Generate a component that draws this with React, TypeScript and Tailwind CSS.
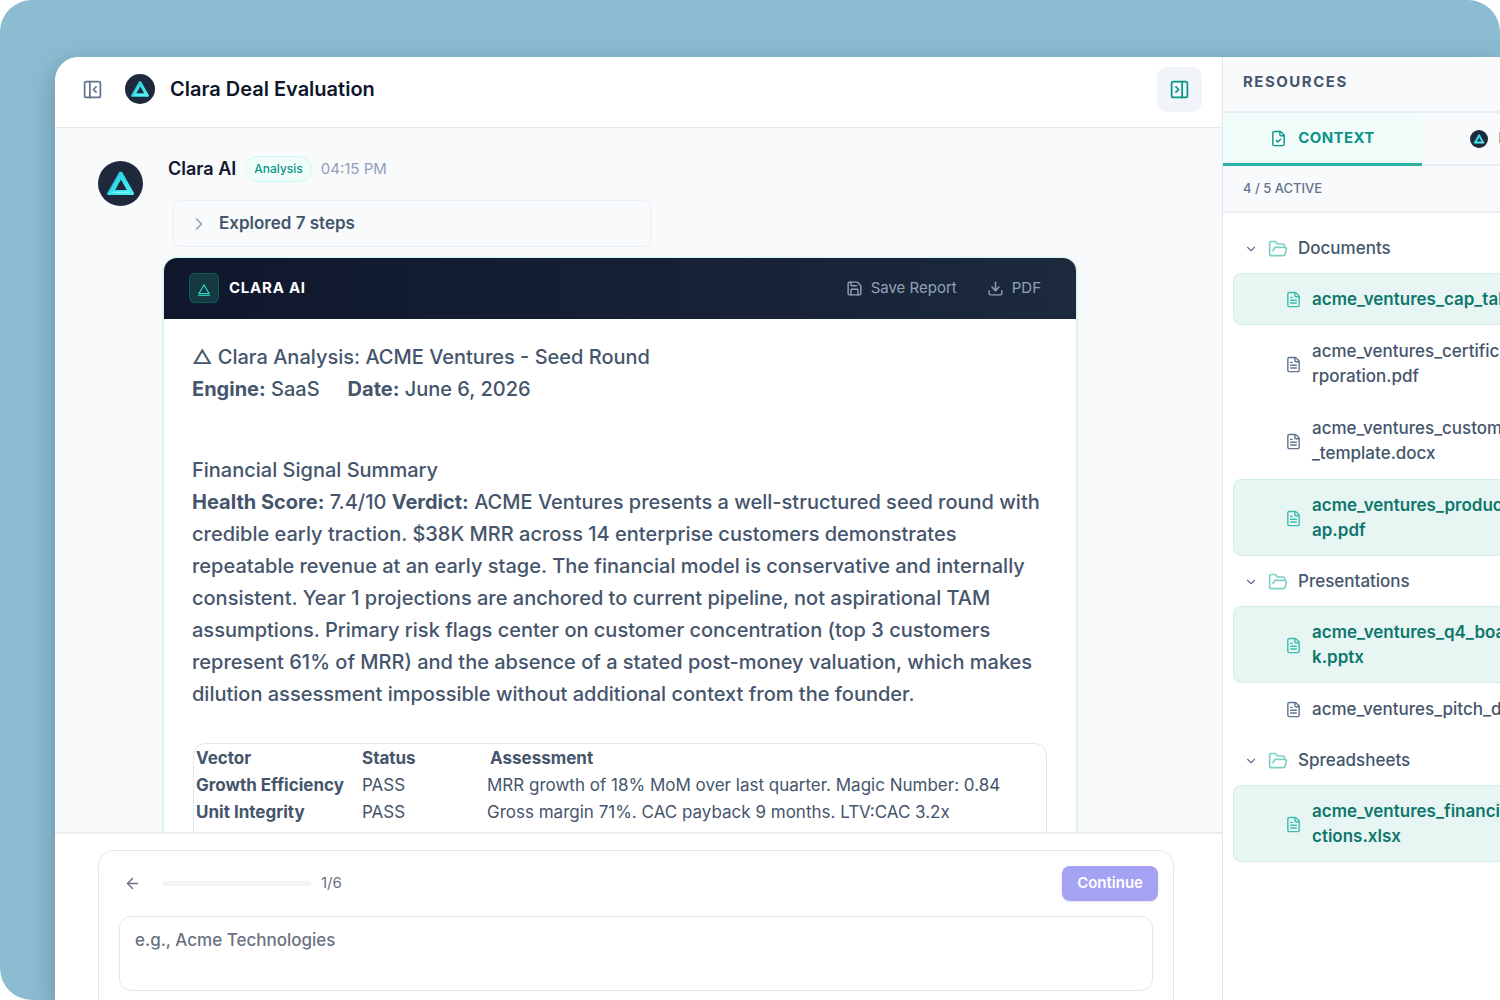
import React, { useState } from 'react';
import {
  ArrowLeft, ChevronDown, ChevronRight, Download, FileCheck, FileText, FolderOpen, PanelLeftClose, PanelRightClose, Save
} from 'lucide-react';

interface ResourceFile {
  lines: string[];
  active: boolean;
}

interface ResourceFolder {
  name: string;
  files: ResourceFile[];
}

const folders: ResourceFolder[] = [
  {
    name: 'Documents',
    files: [
      { lines: ['acme_ventures_cap_table.pdf'], active: true },
      { lines: ['acme_ventures_certificate_inco', 'rporation.pdf'], active: false },
      { lines: ['acme_ventures_customer_contract', '_template.docx'], active: false },
      { lines: ['acme_ventures_product_roadm', 'ap.pdf'], active: true },
    ],
  },
  {
    name: 'Presentations',
    files: [
      { lines: ['acme_ventures_q4_board_dec', 'k.pptx'], active: true },
      { lines: ['acme_ventures_pitch_deck.pptx'], active: false },
    ],
  },
  {
    name: 'Spreadsheets',
    files: [{ lines: ['acme_ventures_financial_proje', 'ctions.xlsx'], active: true }],
  },
];

const vectors = [
  { name: 'Growth Efficiency', status: 'PASS', note: 'MRR growth of 18% MoM over last quarter. Magic Number: 0.84' },
  { name: 'Unit Integrity', status: 'PASS', note: 'Gross margin 71%. CAC payback 9 months. LTV:CAC 3.2x' },
];

const ClaraLogo: React.FC<{ className?: string }> = ({ className }) => (
  <svg viewBox="0 0 45 45" className={className} aria-hidden="true">
    <defs>
      <linearGradient id="clara-edge" x1="0" y1="0" x2="1" y2="1">
        <stop offset="0" stopColor="#2cc4de" />
        <stop offset="0.5" stopColor="#35e0ea" />
        <stop offset="1" stopColor="#4ff0f5" />
      </linearGradient>
    </defs>
    <circle cx="22.5" cy="22.5" r="22.5" fill="#1e293b" />
    <path
      fillRule="evenodd"
      fill="url(#clara-edge)"
      d="M21.4 10.8h2.6L36.2 32.6l-1 1.4H9.8l-.8-1.4L21.4 10.8Zm1.5 7.8L17.2 29h11.6l-5.9-10.4Z"
    />
    <path d="M21.4 11.4 9.6 32.4" stroke="#2a93b8" strokeWidth="0.8" fill="none" />
    <path d="M15 31.4h16" stroke="#7ff7fa" strokeWidth="1.2" fill="none" />
  </svg>
);

const Header: React.FC = () => (
  <header className="flex h-[71px] shrink-0 items-center justify-between border-b border-slate-200 bg-white pr-5 pl-[27px] pb-[6px]">
    <div className="flex items-center">
      <button aria-label="Collapse sidebar" className="text-slate-500">
        <PanelLeftClose size={21} strokeWidth={2} />
      </button>
      <ClaraLogo className="ml-[22px] size-[30px]" />
      <h1 className="ml-[15px] text-xl font-semibold text-slate-900">Clara Deal Evaluation</h1>
    </div>
    <button
      aria-label="Close resources"
      className="flex size-[45px] items-center justify-center rounded-[10px] bg-slate-100 text-[#0d9488]"
    >
      <PanelRightClose size={21} strokeWidth={2} />
    </button>
  </header>
);

const AnalysisCard: React.FC = () => (
  <article className="mt-[10px] overflow-hidden rounded-t-[14px] border border-teal-100 bg-white text-slate-600 shadow-sm">
    <div className="flex h-[61px] items-center justify-between bg-gradient-to-r from-slate-900 to-slate-800 pr-[35px] pb-[1px] pl-[25px]">
      <div className="flex items-center gap-[10px]">
        <span className="flex size-[30px] items-center justify-center rounded-md border border-teal-700/60 bg-[#163840]">
          <svg viewBox="0 0 14 14" className="mt-1 size-[14px]" fill="none" aria-hidden="true">
            <path d="M7 2 1.8 10.6h10.4L7 2Z" stroke="#2dd4bf" strokeWidth="1.2" />
            <path d="M1.2 12.4h11.6" stroke="#2dd4bf" strokeWidth="1" />
          </svg>
        </span>
        <span className="text-[15px] font-bold tracking-wider text-white">CLARA AI</span>
      </div>
      <div className="flex items-center gap-[30px] text-[15px] text-slate-400">
        <button className="flex items-center gap-2">
          <Save size={17} />
          Save Report
        </button>
        <button className="flex items-center gap-2">
          <Download size={17} />
          PDF
        </button>
      </div>
    </div>

    <div className="px-7 pt-[22px] text-xl leading-8 font-[450]">
      <p>△ Clara Analysis: ACME Ventures - Seed Round</p>
      <p className="flex gap-7">
        <span><strong>Engine:</strong> SaaS</span>
        <span><strong>Date:</strong> June 6, 2026</span>
      </p>
      <h2 className="mt-[49px]">Financial Signal Summary</h2>
      <p>
        <strong>Health Score:</strong> 7.4/10 <strong>Verdict:</strong> ACME Ventures presents a well-structured seed
        round with credible early traction. $38K MRR across 14 enterprise customers demonstrates repeatable revenue at
        an early stage. The financial model is conservative and internally consistent. Year 1 projections are anchored
        to current pipeline, not aspirational TAM assumptions. Primary risk flags center on customer concentration (top
        3 customers represent 61% of MRR) and the absence of a stated post-money valuation, which makes dilution
        assessment impossible without additional context from the founder.
      </p>

      <div className="mt-[33px] mr-[1px] ml-[1px] h-[120px] rounded-xl border border-slate-200 pt-[1px] pl-[2px]">
        <table className="w-full table-fixed text-left text-[17px] leading-[27px] font-normal">
          <thead>
            <tr>
              <th className="w-[166px] font-bold">Vector</th>
              <th className="w-[125px] font-bold">Status</th>
              <th className="pl-[3px] font-bold">Assessment</th>
            </tr>
          </thead>
          <tbody>
            {vectors.map((row) => (
              <tr key={row.name}>
                <th className="font-bold whitespace-nowrap">{row.name}</th>
                <td>{row.status}</td>
                <td>{row.note}</td>
              </tr>
            ))}
          </tbody>
        </table>
      </div>
    </div>
  </article>
);

const Messages: React.FC = () => (
  <section className="min-h-0 flex-1 overflow-hidden bg-[#f9fafc] pt-7 pr-12 pl-[43px]">
    <div className="flex gap-5">
      <ClaraLogo className="mt-[5px] size-[45px] shrink-0" />
      <div className="min-w-0 max-w-[914px] flex-1">
        <div className="flex h-[26px] items-center gap-[9px] pl-[5px]">
          <span className="text-lg font-semibold text-slate-900">Clara AI</span>
          <span className="rounded-full border border-teal-100 bg-[#f0fdfa] px-2 text-xs leading-6 font-medium text-[#0d9488]">
            Analysis
          </span>
          <span className="text-[15px] text-slate-400">04:15 PM</span>
        </div>
        <button className="mt-[18px] ml-[10px] flex h-[47px] w-[478px] items-center rounded-lg border border-slate-200/70 pl-[15px] text-[17px] font-semibold text-slate-600">
          <ChevronRight size={20} className="mr-[10px] text-slate-400" />
          Explored 7 steps
        </button>
        <AnalysisCard />
      </div>
    </div>
  </section>
);

const Composer: React.FC = () => {
  const [company, setCompany] = useState('');

  return (
    <footer className="h-[168px] shrink-0 border-t-2 border-slate-200/80 bg-white pt-4 pr-12 pl-[43px]">
      <div className="h-[180px] rounded-2xl border border-gray-200 pt-[15px] pr-5 pl-5">
        <div className="-mr-[5px] flex h-[35px] items-center text-gray-500">
          <button aria-label="Previous question" className="ml-[5px]">
            <ArrowLeft size={17} />
          </button>
          <div className="ml-[21px] h-[5px] w-[149px] rounded-full bg-gray-100" />
          <span className="ml-[10px] text-[15px]">1/6</span>
          <button
            disabled
            className="ml-auto h-[35px] rounded-lg bg-[#a5a2f4] px-[15px] text-[15px] font-semibold text-white shadow-sm"
          >
            Continue
          </button>
        </div>
        <textarea
          aria-label="Company name"
          value={company}
          onChange={(e) => setCompany(e.target.value)}
          placeholder="e.g., Acme Technologies"
          className="mt-[15px] block h-[75px] w-full resize-none rounded-xl border border-gray-200 px-[15px] py-[11px] text-[17px] leading-[25px] font-[450] outline-none placeholder:text-gray-500"
        />
      </div>
    </footer>
  );
};

const Resources: React.FC = () => (
  <aside className="-mr-[121px] flex w-[399px] shrink-0 flex-col border-l border-slate-200 bg-white">
    <div className="h-[56px] border-b-2 border-slate-200/70 bg-[#f9fafc] pt-[13px] pl-5">
      <h2 className="text-[15px] leading-6 font-bold tracking-widest text-slate-600">RESOURCES</h2>
    </div>

    <div className="grid h-[53px] grid-cols-2 bg-[#f9fafc] text-[15px] font-bold">
      <button className="flex items-center justify-center gap-[11px] border-b-3 border-[#2bb0a2] bg-[#f0fdfa] tracking-wide text-[#0d9488]">
        <FileCheck size={17} />
        CONTEXT
      </button>
      <button className="flex items-center justify-center gap-[11px] border-b-2 border-slate-200/70 tracking-wide text-slate-500">
        <ClaraLogo className="size-[18px]" />
        INSIGHTS
      </button>
    </div>

    <p className="border-b-2 border-slate-200/70 bg-[#f9fafc] pl-5 text-[13px] leading-[45px] font-medium text-slate-500">
      4 / 5 ACTIVE
    </p>

    <div className="pt-[10px] pl-[10px]">
      {folders.map((folder) => (
        <div key={folder.name}>
          <button className="flex h-[50px] w-full items-center pt-[1px] pl-[11px] text-[17px] font-[450] text-slate-600">
            <ChevronDown size={14} className="mr-[10px] text-slate-500" />
            <FolderOpen size={20} className="mr-[10px] text-[#7fd0c4]" />
            {folder.name}
          </button>
          <ul>
            {folder.files.map((file) => (
              <li
                key={file.lines[0]}
                className={`flex items-center gap-[10px] rounded-lg border pt-[13px] pb-3 pl-[51px] text-[17px] leading-[25px] whitespace-nowrap ${
                  file.active
                    ? 'border-[#d3ede8] bg-[#e7f6f3] font-semibold text-[#0f766e]'
                    : 'border-transparent font-[450] text-slate-600'
                }`}
              >
                <FileText size={17} className={file.active ? 'text-[#3dbdac]' : 'text-slate-500'} />
                <span>
                  {file.lines.map((line) => (
                    <span key={line} className="block">{line}</span>
                  ))}
                </span>
              </li>
            ))}
          </ul>
        </div>
      ))}
    </div>
  </aside>
);

export default function App() {
  return (
    <div className="h-screen overflow-hidden rounded-l-[32px] rounded-tr-[32px] bg-[#8cbcd2] pt-[57px] pl-[55px] font-['Inter',sans-serif]">
      <div className="flex h-full overflow-hidden rounded-tl-[24px] bg-white shadow-[0_8px_26px_rgba(30,60,80,0.35)]">
        <main className="flex min-w-0 flex-1 flex-col">
          <Header />
          <Messages />
          <Composer />
        </main>
        <Resources />
      </div>
    </div>
  );
}
